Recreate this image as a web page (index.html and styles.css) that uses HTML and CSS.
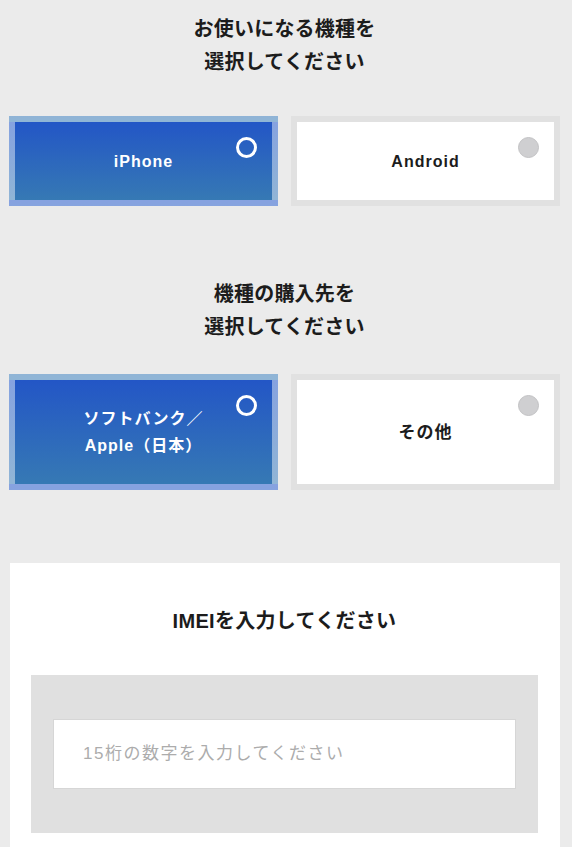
FILE: index.html
```html
<!DOCTYPE html>
<html lang="ja">
<head>
<meta charset="utf-8">
<title>IMEI</title>
<link rel="stylesheet" href="styles.css">
</head>
<body>
<main class="page">
  <section class="step step-device">
    <h2 class="step-title">お使いになる機種を<br>選択してください</h2>
    <div class="choices">
      <label class="choice choice-short is-selected">
        <span class="choice-label">iPhone</span>
        <span class="radio"></span>
      </label>
      <label class="choice choice-short">
        <span class="choice-label">Android</span>
        <span class="radio"></span>
      </label>
    </div>
  </section>

  <section class="step step-shop">
    <h2 class="step-title">機種の購入先を<br>選択してください</h2>
    <div class="choices">
      <label class="choice choice-tall is-selected">
        <span class="choice-label">ソフトバンク／<br>Apple（日本）</span>
        <span class="radio"></span>
      </label>
      <label class="choice choice-tall">
        <span class="choice-label choice-label-light">その他</span>
        <span class="radio"></span>
      </label>
    </div>
  </section>

  <section class="imei">
    <h2 class="imei-title">IMEIを入力してください</h2>
    <div class="imei-box">
      <input class="imei-input" type="text" placeholder="15桁の数字を入力してください">
    </div>
  </section>
</main>
</body>
</html>
```

FILE: styles.css
```css
* {
  box-sizing: border-box;
}

html, body {
  margin: 0;
  padding: 0;
  background: #ebebeb;
}

body {
  font-family: "Liberation Sans", "Noto Sans CJK JP", sans-serif;
  color: #1a1a1a;
}

.page {
  display: flex;
  flex-direction: column;
  padding: 0 12px 0 9px;
}

.step-title {
  margin: 0;
  text-align: center;
  font-size: 20px;
  line-height: 33px;
  font-weight: 700;
  letter-spacing: 0.2px;
  color: #1c1c1c;
}

.step-device {
  padding-top: 13px;
}

.step-device .step-title {
  margin-bottom: 37px;
}

.step-shop {
  padding-top: 72px;
}

.step-shop .step-title {
  margin-bottom: 30px;
}

.choices {
  display: grid;
  grid-template-columns: 1fr 1fr;
  gap: 13px;
}

.choice {
  position: relative;
  display: flex;
  align-items: center;
  justify-content: center;
  border: 6px solid #e1e1e1;
  background: #ffffff;
  cursor: pointer;
}

.choice-short {
  height: 90px;
}

.choice-tall {
  height: 116px;
}

.choice.is-selected {
  border-color: rgba(255, 255, 255, 0.45);
  background: linear-gradient(180deg, #2356c6 0%, #3679b4 100%);
  background-clip: border-box;
}

.choice-label {
  text-align: center;
  font-size: 16px;
  line-height: 27px;
  font-weight: 700;
  letter-spacing: 1px;
  color: #1c1c1c;
}

.choice-label-light {
  font-size: 17px;
}

.is-selected .choice-label {
  color: #ffffff;
}

.radio {
  position: absolute;
  top: 15px;
  right: 15px;
  width: 21px;
  height: 21px;
  border-radius: 50%;
  background: #cfcfd1;
  border: 1px solid #c2c2c4;
}

.is-selected .radio {
  background: transparent;
  border: 3px solid #ffffff;
}

.imei {
  margin-top: 73px;
  margin-left: 1px;
  background: #ffffff;
  padding: 42px 22px 40px 21px;
}

.imei-title {
  margin: 0 0 37px;
  text-align: center;
  font-size: 20px;
  line-height: 33px;
  font-weight: 700;
  letter-spacing: 0.3px;
  color: #1c1c1c;
}

.imei-box {
  background: #e0e0e0;
  padding: 44px 22px;
}

.imei-input {
  display: block;
  width: 100%;
  height: 70px;
  margin: 0;
  border: 1px solid #d6d6d6;
  background: #ffffff;
  padding: 0 20px 0 29px;
  font-family: "Liberation Sans", "Noto Sans CJK JP", sans-serif;
  font-size: 17px;
  letter-spacing: 1.5px;
  color: #333;
  outline: none;
}

.imei-input::placeholder {
  color: #acacac;
}
```
